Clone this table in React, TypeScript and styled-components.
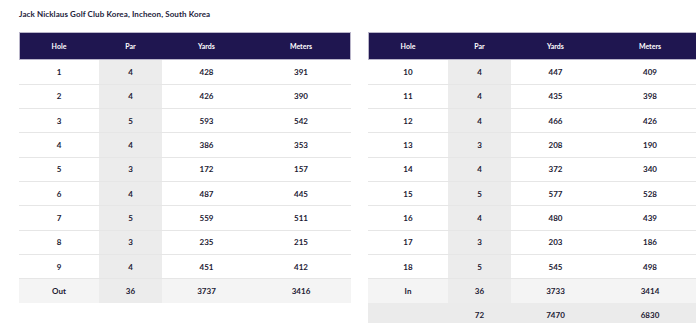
import React from 'react';
import styled, { createGlobalStyle } from 'styled-components';

const GlobalStyle = createGlobalStyle`
  html, body {
    margin: 0;
    padding: 0;
    background: #ffffff;
    overflow: hidden;
  }
  body {
    font-family: Lato, "Open Sans", sans-serif;
    color: #1c1a33;
  }
`;

const Page = styled.div`
  width: 696px;
  height: 323px;
  overflow: hidden;
  padding: 9px 0 0 19px;
  box-sizing: border-box;
`;

const Title = styled.h2`
  margin: 0 0 12px;
  font-size: 8px;
  line-height: 11px;
  font-weight: 700;
  color: #1d1b3a;
  letter-spacing: 0.1px;
`;

const Tables = styled.div`
  display: flex;
  gap: 17px;
  align-items: flex-start;
`;

const Table = styled.table`
  width: 332px;
  flex: 0 0 332px;
  border-collapse: collapse;
  table-layout: fixed;
`;

const HeadRow = styled.tr`
  background: #1f1650;
  outline: 1px solid #b9b5c9;
  outline-offset: -1px;
`;

const Th = styled.th<{ $w: number }>`
  width: ${({ $w }) => $w}px;
  height: 28px;
  padding: 0;
  font-size: 7px;
  font-weight: 700;
  color: #ffffff;
  text-align: center;
`;

const Row = styled.tr<{ $kind?: 'sum' | 'total' }>`
  background: ${({ $kind }) =>
    $kind === 'sum' ? '#f4f4f4' : $kind === 'total' ? '#ebebeb' : '#ffffff'};
  border-bottom: ${({ $kind }) => ($kind ? 'none' : '1px solid #e6e6e6')};
`;

const Td = styled.td<{ $par?: boolean }>`
  height: 24.33px;
  padding: 0;
  box-sizing: border-box;
  font-size: 8px;
  font-weight: 700;
  color: #1c1a33;
  text-align: center;
  background: ${({ $par }) => ($par ? '#ececec' : 'transparent')};
`;

type Hole = [string, string, string, string];

const front: Hole[] = [
  ['1', '4', '428', '391'],
  ['2', '4', '426', '390'],
  ['3', '5', '593', '542'],
  ['4', '4', '386', '353'],
  ['5', '3', '172', '157'],
  ['6', '4', '487', '445'],
  ['7', '5', '559', '511'],
  ['8', '3', '235', '215'],
  ['9', '4', '451', '412'],
];

const back: Hole[] = [
  ['10', '4', '447', '409'],
  ['11', '4', '435', '398'],
  ['12', '4', '466', '426'],
  ['13', '3', '208', '190'],
  ['14', '4', '372', '340'],
  ['15', '5', '577', '528'],
  ['16', '4', '480', '439'],
  ['17', '3', '203', '186'],
  ['18', '5', '545', '498'],
];

const widths = [80, 63, 89, 100];
const heads = ['Hole', 'Par', 'Yards', 'Meters'];

const ScoreTable: React.FC<{ rows: Hole[]; sum: Hole; total?: Hole }> = ({
  rows,
  sum,
  total,
}) => (
  <Table>
    <thead>
      <HeadRow>
        {heads.map((h, i) => (
          <Th key={h} $w={widths[i]}>
            {h}
          </Th>
        ))}
      </HeadRow>
    </thead>
    <tbody>
      {rows.map((r) => (
        <Row key={r[0]}>
          <Td>{r[0]}</Td>
          <Td $par>{r[1]}</Td>
          <Td>{r[2]}</Td>
          <Td>{r[3]}</Td>
        </Row>
      ))}
      <Row $kind="sum">
        <Td>{sum[0]}</Td>
        <Td $par>{sum[1]}</Td>
        <Td>{sum[2]}</Td>
        <Td>{sum[3]}</Td>
      </Row>
      {total && (
        <Row $kind="total">
          <Td>{total[0]}</Td>
          <Td>{total[1]}</Td>
          <Td>{total[2]}</Td>
          <Td>{total[3]}</Td>
        </Row>
      )}
    </tbody>
  </Table>
);

export default function App() {
  return (
    <>
      <GlobalStyle />
      <Page>
        <Title>Jack Nicklaus Golf Club Korea, Incheon, South Korea</Title>
        <Tables>
          <ScoreTable rows={front} sum={['Out', '36', '3737', '3416']} />
          <ScoreTable
            rows={back}
            sum={['In', '36', '3733', '3414']}
            total={['', '72', '7470', '6830']}
          />
        </Tables>
      </Page>
    </>
  );
}
